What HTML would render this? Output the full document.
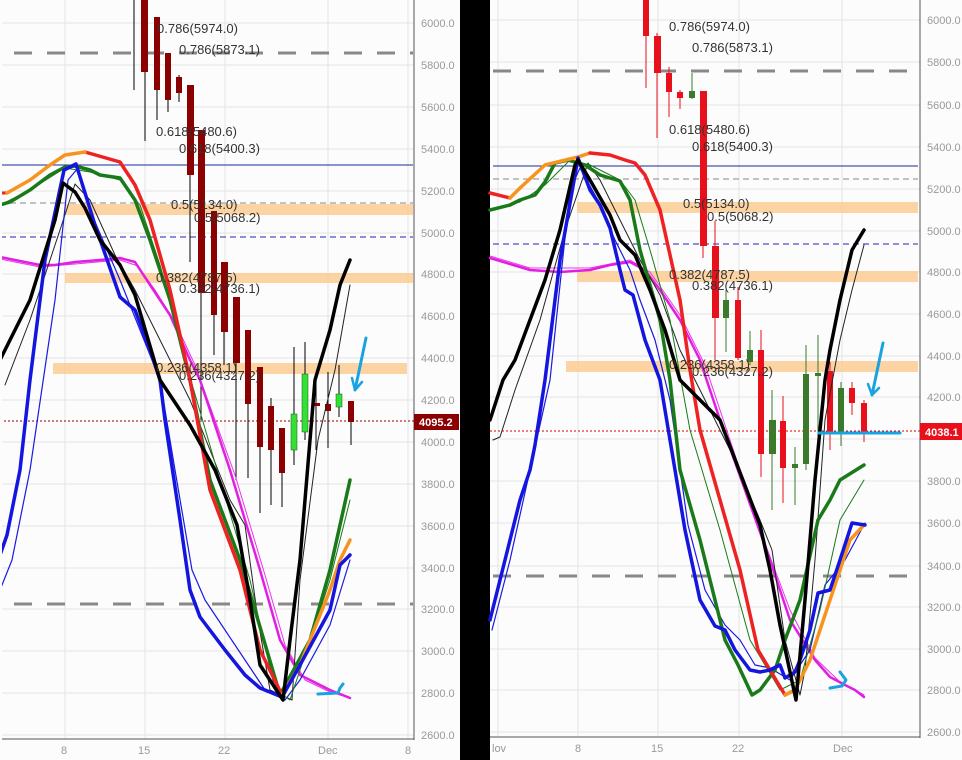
<!DOCTYPE html>
<html><head><meta charset="utf-8"><style>
html,body{margin:0;padding:0;background:#000;}
svg{display:block;font-family:"Liberation Sans",sans-serif;}
.ax{fill:#999;font-size:11px;}
.fb{fill:#333;font-size:13px;}
.g{stroke:#e4e4e4;stroke-width:1;}
</style></head><body>
<svg width="962" height="760" viewBox="0 0 962 760" xmlns="http://www.w3.org/2000/svg">
<rect x="0" y="0" width="962" height="760" fill="#000"/>
<!-- LEFT PANEL -->
<rect x="0" y="0" width="460" height="760" fill="#fcfcfc"/>
<g class="g">
<line x1="0" y1="23" x2="414" y2="23"/><line x1="0" y1="65" x2="414" y2="65"/><line x1="0" y1="107" x2="414" y2="107"/><line x1="0" y1="149" x2="414" y2="149"/><line x1="0" y1="191" x2="414" y2="191"/><line x1="0" y1="233" x2="414" y2="233"/><line x1="0" y1="274" x2="414" y2="274"/><line x1="0" y1="316" x2="414" y2="316"/><line x1="0" y1="358" x2="414" y2="358"/><line x1="0" y1="400" x2="414" y2="400"/><line x1="0" y1="442" x2="414" y2="442"/><line x1="0" y1="484" x2="414" y2="484"/><line x1="0" y1="526" x2="414" y2="526"/><line x1="0" y1="568" x2="414" y2="568"/><line x1="0" y1="609" x2="414" y2="609"/><line x1="0" y1="651" x2="414" y2="651"/><line x1="0" y1="693" x2="414" y2="693"/><line x1="0" y1="735" x2="414" y2="735"/>
<line x1="65" y1="0" x2="65" y2="739"/><line x1="145" y1="0" x2="145" y2="739"/><line x1="225" y1="0" x2="225" y2="739"/><line x1="328" y1="0" x2="328" y2="739"/><line x1="408" y1="0" x2="408" y2="739"/>
</g>
<line x1="414" y1="0" x2="414" y2="740" stroke="#555"/>
<line x1="0" y1="739" x2="414" y2="739" stroke="#555"/>
<g class="ax">
<text x="421" y="27">6000.0</text><text x="421" y="69">5800.0</text><text x="421" y="111">5600.0</text><text x="421" y="153">5400.0</text><text x="421" y="195">5200.0</text><text x="421" y="237">5000.0</text><text x="421" y="278">4800.0</text><text x="421" y="320">4600.0</text><text x="421" y="362">4400.0</text><text x="421" y="404">4200.0</text><text x="421" y="446">4000.0</text><text x="421" y="488">3800.0</text><text x="421" y="530">3600.0</text><text x="421" y="572">3400.0</text><text x="421" y="613">3200.0</text><text x="421" y="655">3000.0</text><text x="421" y="697">2800.0</text><text x="421" y="739">2600.0</text>
<text x="61" y="754">8</text><text x="138" y="754">15</text><text x="218" y="754">22</text><text x="318" y="754">Dec</text><text x="405" y="754">8</text>
</g>
<!-- bands -->
<rect x="65" y="204" width="348" height="11" fill="#fbc98c" opacity="0.8"/>
<rect x="65" y="273" width="348" height="10" fill="#fbc98c" opacity="0.8"/>
<rect x="53" y="363" width="354" height="11" fill="#fbc98c" opacity="0.8"/>
<line x1="14" y1="53" x2="413" y2="53" stroke="#888" stroke-width="3" stroke-dasharray="18,15"/>
<line x1="14" y1="604" x2="413" y2="604" stroke="#888" stroke-width="3" stroke-dasharray="18,15"/>
<line x1="0" y1="203" x2="413" y2="203" stroke="#888" stroke-dasharray="6,4"/>
<line x1="0" y1="237" x2="413" y2="237" stroke="#22b" stroke-dasharray="6,4"/>
<line x1="0" y1="165" x2="413" y2="165" stroke="#1a2a9a"/>
<line x1="0" y1="421" x2="414" y2="421" stroke="#900" stroke-dasharray="2,2"/>
<!-- candles left -->
<g stroke="#000" stroke-width="1">
<line x1="134" y1="0" x2="134" y2="90"/><line x1="145" y1="0" x2="145" y2="141"/><line x1="157" y1="17" x2="157" y2="120"/><line x1="168" y1="53" x2="168" y2="112"/><line x1="179" y1="75" x2="179" y2="102"/><line x1="190" y1="85" x2="190" y2="262"/><line x1="201" y1="130" x2="201" y2="420"/><line x1="214" y1="211" x2="214" y2="355"/><line x1="224" y1="262" x2="224" y2="365"/><line x1="236" y1="297" x2="236" y2="480"/><line x1="248" y1="330" x2="248" y2="478"/><line x1="260" y1="367" x2="260" y2="513"/><line x1="271" y1="398" x2="271" y2="505"/><line x1="282" y1="428" x2="282" y2="507"/><line x1="294" y1="347" x2="294" y2="465"/><line x1="305" y1="342" x2="305" y2="440"/><line x1="316" y1="380" x2="316" y2="450"/><line x1="328" y1="372" x2="328" y2="448"/><line x1="339" y1="365" x2="339" y2="417"/><line x1="351" y1="401" x2="351" y2="445"/>
</g>
<g fill="#8b0000">
<rect x="141" y="0" width="7" height="72"/><rect x="154" y="17" width="6" height="73"/><rect x="165" y="53" width="6" height="47"/><rect x="176" y="77" width="6" height="16"/><rect x="187" y="85" width="7" height="90"/><rect x="198" y="130" width="7" height="163"/><rect x="211" y="211" width="6" height="104"/><rect x="221" y="262" width="7" height="70"/><rect x="233" y="297" width="7" height="66"/><rect x="245" y="330" width="6" height="74"/><rect x="257" y="367" width="6" height="80"/><rect x="268" y="406" width="6" height="44"/><rect x="279" y="428" width="6" height="45"/><rect x="313" y="403" width="7" height="3"/><rect x="325" y="404" width="6" height="7"/><rect x="348" y="401" width="6" height="21"/>
</g>
<g fill="#33e033" stroke="#1a5a1a" stroke-width="0.5">
<rect x="291" y="414" width="6" height="36"/><rect x="302" y="374" width="6" height="58"/><rect x="336" y="394" width="6" height="13"/>
</g>
<!-- curves left -->
<g fill="none" stroke-linejoin="round" stroke-linecap="round">
<polyline stroke="#ee33ee" stroke-width="1" points="0,259 40,267 75,264 120,260 138,266 155,290 175,322 195,365 235,475 265,575 285,645 305,680 330,692 350,698"/>
<polyline stroke="#e020e0" stroke-width="2.5" points="0,257 20,261 40,265 55,265 75,262 100,260 120,258 135,262 150,285 170,315 190,360 200,380 230,470 260,570 280,640 300,675 330,690 350,698"/>
<polyline stroke="#222" stroke-width="1" points="5,385 30,320 60,230 75,184 90,200 115,255 135,290 160,340 190,400 230,500 245,525 258,620 270,690 292,700 300,580 318,440 335,370 350,285"/>
<polyline stroke="#1a1ae0" stroke-width="1.2" points="0,590 12,560 30,470 55,300 68,180 78,168 92,215 120,280 140,330 160,380 175,470 192,570 205,600 225,630 245,660 265,690 285,700 300,680 330,625 350,560"/>
<polyline stroke="#1a7a1a" stroke-width="1" points="0,205 30,190 65,168 90,172 120,180 140,205 160,265 185,360 220,480 250,580 275,690 290,700 310,640 330,580 350,500"/>
<polyline stroke="#1a7a1a" stroke-width="3.5" points="0,205 10,202 30,190 50,175 65,167 75,166 90,170 100,175 120,178 135,200 150,240 170,300 190,380 210,480 240,560 255,610 280,695 310,640 330,570 350,480"/>
<polyline stroke="#ee2222" stroke-width="3.5" points="85,152 120,162 135,185 150,220 170,290 190,380 210,490 240,570 260,650 282,695"/>
<polyline stroke="#ee2222" stroke-width="3" points="0,193 7,193"/>
<polyline stroke="#f7931e" stroke-width="3.5" points="7,193 30,180 50,165 65,155 85,152"/>
<polyline stroke="#f7931e" stroke-width="3.5" points="282,695 300,665 330,590 340,560 350,540"/>
<polyline stroke="#1515e0" stroke-width="3.5" points="0,555 7,535 20,470 30,380 45,260 64,170 76,164 95,225 120,297 135,310 150,350 160,380 165,420 180,520 190,590 200,617 225,650 245,675 260,688 282,697 300,665 330,610 340,565 350,555"/>
<polyline stroke="#000" stroke-width="3.5" points="0,360 10,340 30,300 55,220 63,183 75,192 85,208 100,240 120,265 135,295 160,380 170,395 190,425 215,470 237,525 250,600 260,665 283,700 290,640 300,560 315,380 330,330 340,285 350,260"/>
<polyline stroke="#19a3e0" stroke-width="3" points="366,338 355,390"/>
<polyline stroke="#19a3e0" stroke-width="2.5" points="352,378 355,390 362,382"/>
<polyline stroke="#19a3e0" stroke-width="3" points="318,694 338,693 340,688 343,684"/>
</g>
<g class="fb">
<text x="157" y="33">0.786(5974.0)</text><text x="179" y="54">0.786(5873.1)</text><text x="156" y="136">0.618(5480.6)</text><text x="179" y="153">0.618(5400.3)</text><text x="171" y="209">0.5(5134.0)</text><text x="194" y="222">0.5(5068.2)</text><text x="156" y="282">0.382(4787.5)</text><text x="179" y="293">0.382(4736.1)</text><text x="156" y="372">0.236(4358.1)</text><text x="179" y="380">0.236(4327.2)</text>
</g>
<rect x="414" y="414" width="45" height="16" fill="#8b0000"/>
<text x="419" y="426" fill="#fff" font-size="11" font-weight="bold">4095.2</text>

<!-- RIGHT PANEL -->
<rect x="490" y="0" width="472" height="760" fill="#fcfcfc"/>
<g class="g">
<line x1="490" y1="20" x2="920" y2="20"/><line x1="490" y1="62" x2="920" y2="62"/><line x1="490" y1="105" x2="920" y2="105"/><line x1="490" y1="147" x2="920" y2="147"/><line x1="490" y1="189" x2="920" y2="189"/><line x1="490" y1="231" x2="920" y2="231"/><line x1="490" y1="272" x2="920" y2="272"/><line x1="490" y1="314" x2="920" y2="314"/><line x1="490" y1="356" x2="920" y2="356"/><line x1="490" y1="397" x2="920" y2="397"/><line x1="490" y1="439" x2="920" y2="439"/><line x1="490" y1="481" x2="920" y2="481"/><line x1="490" y1="523" x2="920" y2="523"/><line x1="490" y1="566" x2="920" y2="566"/><line x1="490" y1="607" x2="920" y2="607"/><line x1="490" y1="649" x2="920" y2="649"/><line x1="490" y1="690" x2="920" y2="690"/><line x1="490" y1="732" x2="920" y2="732"/>
<line x1="498" y1="0" x2="498" y2="737"/><line x1="578" y1="0" x2="578" y2="737"/><line x1="658" y1="0" x2="658" y2="737"/><line x1="739" y1="0" x2="739" y2="737"/><line x1="842" y1="0" x2="842" y2="737"/>
</g>
<line x1="920" y1="0" x2="920" y2="738" stroke="#555"/>
<line x1="490" y1="737" x2="920" y2="737" stroke="#555"/>
<g class="ax">
<text x="927" y="24">6000.0</text><text x="927" y="66">5800.0</text><text x="927" y="109">5600.0</text><text x="927" y="151">5400.0</text><text x="927" y="193">5200.0</text><text x="927" y="235">5000.0</text><text x="927" y="276">4800.0</text><text x="927" y="318">4600.0</text><text x="927" y="360">4400.0</text><text x="927" y="401">4200.0</text><text x="927" y="485">3800.0</text><text x="927" y="527">3600.0</text><text x="927" y="570">3400.0</text><text x="927" y="611">3200.0</text><text x="927" y="653">3000.0</text><text x="927" y="694">2800.0</text><text x="927" y="736">2600.0</text>
<text x="492" y="752">lov</text><text x="575" y="752">8</text><text x="651" y="752">15</text><text x="732" y="752">22</text><text x="833" y="752">Dec</text>
</g>
<rect x="577" y="202" width="341" height="11" fill="#fbc98c" opacity="0.8"/>
<rect x="577" y="271" width="341" height="11" fill="#fbc98c" opacity="0.8"/>
<rect x="566" y="361" width="352" height="11" fill="#fbc98c" opacity="0.8"/>
<line x1="493" y1="71" x2="918" y2="71" stroke="#888" stroke-width="3" stroke-dasharray="18,15"/>
<line x1="493" y1="576" x2="918" y2="576" stroke="#888" stroke-width="3" stroke-dasharray="18,15"/>
<line x1="493" y1="179" x2="918" y2="179" stroke="#888" stroke-dasharray="6,4"/>
<line x1="493" y1="244" x2="918" y2="244" stroke="#22b" stroke-dasharray="6,4"/>
<line x1="493" y1="166" x2="918" y2="166" stroke="#1a2a9a"/>
<line x1="490" y1="431" x2="920" y2="431" stroke="#d00" stroke-dasharray="2,2"/>
<g stroke-width="1">
<g stroke="#e8101a">
<line x1="646" y1="0" x2="646" y2="88"/><line x1="657" y1="33" x2="657" y2="138"/><line x1="669" y1="67" x2="669" y2="117"/><line x1="680" y1="90" x2="680" y2="109"/><line x1="703" y1="91" x2="703" y2="258"/><line x1="715" y1="221" x2="715" y2="360"/><line x1="738" y1="287" x2="738" y2="360"/><line x1="761" y1="330" x2="761" y2="477"/><line x1="783" y1="396" x2="783" y2="503"/><line x1="830" y1="362" x2="830" y2="450"/><line x1="852" y1="382" x2="852" y2="415"/><line x1="864" y1="400" x2="864" y2="442"/>
</g>
<g stroke="#3a7a2a">
<line x1="692" y1="73" x2="692" y2="99"/><line x1="726" y1="290" x2="726" y2="352"/><line x1="750" y1="331" x2="750" y2="365"/><line x1="772" y1="390" x2="772" y2="510"/><line x1="795" y1="447" x2="795" y2="505"/><line x1="806" y1="345" x2="806" y2="470"/><line x1="818" y1="335" x2="818" y2="440"/><line x1="841" y1="382" x2="841" y2="446"/>
</g>
</g>
<g fill="#e8101a">
<rect x="643" y="0" width="6" height="36"/><rect x="654" y="36" width="7" height="37"/><rect x="666" y="73" width="6" height="19"/><rect x="677" y="92" width="6" height="6"/><rect x="700" y="91" width="7" height="155"/><rect x="712" y="246" width="7" height="72"/><rect x="735" y="300" width="6" height="58"/><rect x="758" y="350" width="6" height="104"/><rect x="780" y="421" width="6" height="47"/><rect x="827" y="371" width="6" height="61"/><rect x="849" y="388" width="6" height="15"/><rect x="861" y="403" width="6" height="29"/>
</g>
<g fill="#3a7a2a">
<rect x="689" y="91" width="6" height="7"/><rect x="723" y="300" width="6" height="18"/><rect x="747" y="350" width="6" height="12"/><rect x="769" y="420" width="7" height="34"/><rect x="792" y="464" width="6" height="4"/><rect x="803" y="374" width="6" height="90"/><rect x="815" y="373" width="6" height="3"/><rect x="838" y="388" width="6" height="44"/>
</g>
<g fill="none" stroke-linejoin="round" stroke-linecap="round">
<polyline stroke="#ee33ee" stroke-width="1" points="490,256 530,268 590,268 630,260 650,272 680,315 705,365 730,440 760,530 790,610 815,658 840,682 864,695"/>
<polyline stroke="#e020e0" stroke-width="2.5" points="490,258 510,264 530,270 560,272 590,270 610,265 630,262 645,270 660,290 680,320 700,360 720,420 745,490 770,560 790,620 815,660 830,677 845,685 855,690 864,697"/>
<polyline stroke="#222" stroke-width="1" points="493,440 500,437 515,390 540,320 565,230 588,163 600,180 620,220 640,260 660,295 680,350 700,390 730,450 760,520 772,550 785,640 800,695 805,670 815,560 825,420 840,340 852,290 864,245"/>
<polyline stroke="#1a1ae0" stroke-width="1.2" points="492,630 510,560 530,470 550,380 570,190 580,168 595,195 615,240 630,270 640,300 655,340 670,400 688,525 705,590 725,625 740,640 755,665 770,668 790,680 810,650 825,585 845,560 865,523"/>
<polyline stroke="#1a7a1a" stroke-width="1" points="490,210 520,202 545,185 570,160 590,165 620,180 635,200 650,250 670,320 690,430 720,530 750,640 780,690 800,680 820,610 840,520 864,480"/>
<polyline stroke="#1a7a1a" stroke-width="3.5" points="490,210 510,205 520,200 535,195 545,182 555,163 568,160 585,165 600,175 620,181 630,200 640,250 660,320 670,380 680,470 700,540 725,640 738,665 752,695 760,690 775,670 785,640 800,600 818,520 830,500 840,480 864,465"/>
<polyline stroke="#ee2222" stroke-width="3.5" points="490,193 510,198"/>
<polyline stroke="#f7931e" stroke-width="3.5" points="510,198 520,188 545,165 578,157 590,153"/>
<polyline stroke="#ee2222" stroke-width="3.5" points="590,153 610,155 625,160 635,163 645,175 660,210 680,300 690,370 700,430 740,570 758,650 770,670 785,695"/>
<polyline stroke="#f7931e" stroke-width="3.5" points="785,695 795,690 810,660 830,600 850,540 864,525"/>
<polyline stroke="#1515e0" stroke-width="3.5" points="490,620 510,540 520,500 530,470 535,445 545,380 560,260 578,158 590,190 600,205 610,228 620,270 625,290 633,295 645,340 660,380 670,440 685,530 700,600 715,626 725,630 735,650 750,670 760,672 770,670 780,665 785,678 795,672 800,660 810,630 818,593 830,590 840,560 852,523 865,525"/>
<polyline stroke="#000" stroke-width="3.5" points="490,420 503,380 515,360 530,320 545,280 560,230 575,165 578,160 590,180 610,215 620,240 635,255 650,290 665,330 680,380 690,390 720,420 760,525 770,570 780,625 796,700 805,600 815,480 825,380 830,350 840,300 852,250 864,230"/>
<line x1="819" y1="433" x2="900" y2="433" stroke="#19a3e0" stroke-width="3"/>
<polyline stroke="#19a3e0" stroke-width="3" points="883,343 872,395"/>
<polyline stroke="#19a3e0" stroke-width="2.5" points="868,384 872,395 879,388"/>
<polyline stroke="#19a3e0" stroke-width="3" points="830,688 842,686 846,680 840,672"/>
</g>
<g class="fb">
<text x="669" y="31">0.786(5974.0)</text><text x="692" y="52">0.786(5873.1)</text><text x="669" y="134">0.618(5480.6)</text><text x="692" y="151">0.618(5400.3)</text><text x="683" y="208">0.5(5134.0)</text><text x="707" y="221">0.5(5068.2)</text><text x="669" y="279">0.382(4787.5)</text><text x="692" y="290">0.382(4736.1)</text><text x="669" y="369">0.236(4358.1)</text><text x="692" y="376">0.236(4327.2)</text>
</g>
<rect x="920" y="423" width="42" height="17" fill="#e8101a"/>
<text x="925" y="436" fill="#fff" font-size="11" font-weight="bold">4038.1</text>
<rect x="0" y="0" width="2" height="760" fill="#fcfcfc"/>
</svg>
</body></html>
